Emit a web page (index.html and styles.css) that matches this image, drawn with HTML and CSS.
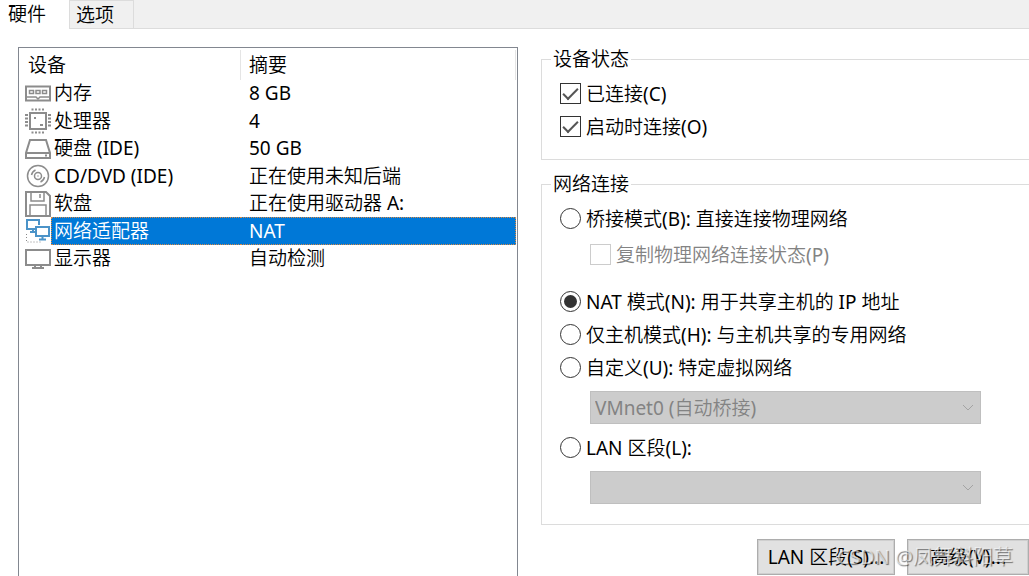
FILE: index.html
```html
<!DOCTYPE html>
<html lang="zh-CN">
<head>
<meta charset="utf-8">
<title>虚拟机设置</title>
<link rel="stylesheet" href="styles.css">
</head>
<body>
<div class="tabs" role="tablist">
  <button class="tab tab-active" role="tab" aria-selected="true">硬件</button>
  <button class="tab" role="tab" aria-selected="false">选项</button>
</div>
<main class="panel">
  <section class="devices">
    <table class="device-table">
      <thead>
        <tr><th class="col-device">设备</th><th class="col-summary">摘要</th></tr>
      </thead>
      <tbody>
        <tr><td><div class="device">
          <svg class="icon" viewBox="0 0 26 26" fill="none" stroke="#8c8c8c" stroke-width="2"><path d="M1 5.500h24v14H1z"/><path d="M1 16h10l2 2 2-2h10" stroke-width="1.500"/><path d="M4.500 9.500h4v3h-4zM11 9.500h4v3h-4zM17.500 9.500h4v3h-4z" stroke-width="1.500"/></svg>
          <span class="name">内存</span></div></td><td>8 GB</td></tr>
        <tr><td><div class="device">
          <svg class="icon" viewBox="0 0 26 26" fill="none" stroke="#8c8c8c" stroke-width="2"><rect x="5" y="5" width="16" height="16"/><path d="M6.500 1.500h2m1.500 0h2m1.500 0h2m1.500 0h2M6.500 24.500h2m1.500 0h2m1.500 0h2m1.500 0h2" stroke-width="2"/><path d="M1.500 6v2m0 1.500v2m0 1.500v2m0 1.500v2M24.500 6v2m0 1.500v2m0 1.500v2m0 1.500v2" stroke-width="3"/><path d="M9 10h2M15 17h3" stroke-width="2"/></svg>
          <span class="name">处理器</span></div></td><td>4</td></tr>
        <tr><td><div class="device">
          <svg class="icon" viewBox="0 0 26 26" fill="none" stroke="#8c8c8c" stroke-width="2"><path d="M5 4h16l4 13v5H1v-5z"/><path d="M1 17h24"/><path d="M20 19.500h2"/></svg>
          <span class="name">硬盘 (IDE)</span></div></td><td>50 GB</td></tr>
        <tr><td><div class="device">
          <svg class="icon" viewBox="0 0 26 26" fill="none" stroke="#8c8c8c" stroke-width="1.500"><circle cx="13" cy="13" r="10.500"/><circle cx="13" cy="13" r="3.500"/><path d="M6.500 12a7 7 0 0 1 4-5M19.500 14a7 7 0 0 1-4 5"/><path d="M12.500 13h1"/></svg>
          <span class="name">CD/DVD (IDE)</span></div></td><td>正在使用未知后端</td></tr>
        <tr><td><div class="device">
          <svg class="icon" viewBox="0 0 26 26" fill="none" stroke="#8c8c8c" stroke-width="2"><path d="M1 1h20l4 4v20H1z"/><path d="M6 1v9h13V1M15 3v4M5 25V14h16v11" stroke-width="1.500"/></svg>
          <span class="name">软盘</span></div></td><td>正在使用驱动器 A:</td></tr>
        <tr class="selected" aria-selected="true"><td><div class="device">
          <svg class="icon" viewBox="0 0 26 26" fill="none" stroke="#4b93c8" stroke-width="2"><path d="M10 11H2V2h12v5M5 14h5M8 12v2"/><path d="M11 9h13v9H11zM17.500 18v3M14 21.500h7"/><path d="M1.500 16v8H16" stroke="#888" stroke-dasharray="1 2" stroke-width="1"/></svg>
          <span class="name">网络适配器</span></div></td><td>NAT</td></tr>
        <tr><td><div class="device">
          <svg class="icon" viewBox="0 0 26 26" fill="none" stroke="#8c8c8c" stroke-width="2"><path d="M1 4h24v15H1z"/><path d="M10 20v2M16 20v2M7 22h12"/></svg>
          <span class="name">显示器</span></div></td><td>自动检测</td></tr>
      </tbody>
    </table>
  </section>
  <section class="settings">
    <fieldset class="group group-status">
      <legend>设备状态</legend>
      <label class="option"><input type="checkbox" checked>已连接(C)</label>
      <label class="option"><input type="checkbox" checked>启动时连接(O)</label>
    </fieldset>
    <fieldset class="group group-network">
      <legend>网络连接</legend>
      <label class="option"><input type="radio" name="mode">桥接模式(B): 直接连接物理网络</label>
      <label class="option option-sub"><input type="checkbox" disabled>复制物理网络连接状态(P)</label>
      <label class="option"><input type="radio" name="mode" checked>NAT 模式(N): 用于共享主机的 IP 地址</label>
      <label class="option"><input type="radio" name="mode">仅主机模式(H): 与主机共享的专用网络</label>
      <label class="option"><input type="radio" name="mode">自定义(U): 特定虚拟网络</label>
      <div class="combo">
        <select disabled aria-label="特定虚拟网络"><option>VMnet0 (自动桥接)</option></select>
        <svg class="chevron" viewBox="0 0 12 8" fill="none" stroke="#a3a3a3"><path d="M1 1l5 5 5-5"/></svg>
      </div>
      <label class="option option-lan"><input type="radio" name="mode">LAN 区段(L):</label>
      <div class="combo">
        <select disabled aria-label="LAN 区段"><option></option></select>
        <svg class="chevron" viewBox="0 0 12 8" fill="none" stroke="#a3a3a3"><path d="M1 1l5 5 5-5"/></svg>
      </div>
    </fieldset>
    <div class="actions">
      <button class="button button-lan">LAN 区段(S)...</button>
      <button class="button button-advanced">高级(V)...</button>
    </div>
  </section>
</main>
<div class="watermark">CSDN @凤舞斜阳草</div>
</body>
</html>
```
FILE: styles.css
```css
* {
  box-sizing: border-box;
}

body {
  margin: 0;
  height: 100vh;
  display: flex;
  flex-direction: column;
  position: relative;
  overflow: hidden;
  background: #fff;
  color: #000;
  font: 400 19px/28px "Noto Sans", "Noto Sans CJK SC DemiLight", "Noto Sans CJK SC", sans-serif;
}

button,
select,
input {
  font: inherit;
  color: inherit;
  margin: 0;
}

.tabs {
  display: flex;
  height: 29px;
  flex: none;
  background: #f0f0f0;
  border-bottom: 1px solid #dcdcdc;
}

.tab {
  width: 64px;
  padding: 0 0 0 6px;
  text-align: left;
  border: 1px solid #dcdcdc;
  border-width: 1px 1px 0 0;
  background: #f0f0f0;
}

.tab-active {
  width: 70px;
  height: 29px;
  padding: 0 0 6px 8px;
  border-top: 0;
  background: #fff;
}

.panel {
  flex: 1;
  min-height: 0;
  display: flex;
  gap: 23px;
  padding: 18px 0 0 18px;
}

.devices {
  flex: 0 0 500px;
  padding: 2px 1px 0 6px;
  border: 1px solid #828790;
  border-bottom: 0;
}

.device-table {
  width: 100%;
  border-collapse: separate;
  border-spacing: 0;
  table-layout: fixed;
}

th,
td {
  padding: 0 0 0 8px;
  text-align: left;
  font-weight: inherit;
}

th {
  height: 30px;
  border-right: 1px solid #e5e5e5;
}

.col-device {
  width: 216px;
  padding-left: 3px;
}

td {
  line-height: 27px;
  height: 27px;
}

tr:nth-child(even) td {
  line-height: 28px;
  height: 28px;
}

td:first-child {
  padding: 0;
}

.device {
  display: flex;
  align-items: center;
}

.icon {
  width: 26px;
  height: 26px;
  flex: none;
}

.name {
  flex: 1;
  padding-left: 3px;
}

.device-table .selected td {
  color: #fff;
  line-height: 26px;
}

.selected .name,
.selected td:last-child {
  background: #0078d7;
  border: 1px dotted #d98a45;
}

.selected .name {
  border-right: 0;
  padding-left: 2px;
}

.selected td:last-child {
  border-left: 0;
}

.settings {
  flex: 1;
  min-width: 0;
}

.group {
  min-width: 0;
  margin: 0 -2px 0 0;
  border: 1px solid #dcdcdc;
  padding: 5px 0 0 18px;
}

.group-status {
  padding-bottom: 16px;
}

.group-network {
  margin-top: 12px;
  padding-bottom: 20px;
}

legend {
  height: 25px;
  line-height: 25px;
  padding: 0 2px;
  margin-left: -9px;
}

.option {
  display: flex;
  align-items: center;
  gap: 5px;
  height: 33px;
  white-space: nowrap;
}

.option-sub {
  margin: 3px 0 14px 30px;
  color: #838383;
}

.option-lan {
  margin-top: 7px;
}

input {
  appearance: none;
  flex: none;
  width: 21px;
  height: 21px;
  border: 1px solid #333;
  background: #fff;
  display: grid;
  place-items: center;
}

input[type="radio"] {
  border-radius: 50%;
}

input[type="radio"]:checked::before {
  content: "";
  width: 13px;
  height: 13px;
  border-radius: 50%;
  background: #333;
}

input[type="checkbox"]:checked::before {
  content: "";
  width: 13px;
  height: 6px;
  margin-bottom: 4px;
  border: solid #555;
  border-width: 0 0 2px 2px;
  transform: rotate(-45deg);
}

input:disabled {
  border-color: #ccc;
}

.combo {
  position: relative;
  width: 391px;
  margin: 7px 0 0 30px;
}

.combo select {
  appearance: none;
  display: block;
  width: 100%;
  height: 33px;
  padding: 0 4px;
  border: 1px solid #bfbfbf;
  border-radius: 0;
  background: #ccc;
  color: #838383;
  opacity: 1;
}

.chevron {
  position: absolute;
  right: 7px;
  top: 13px;
  width: 12px;
  height: 8px;
}

.actions {
  display: flex;
  gap: 12px;
  justify-content: flex-end;
  margin-top: 14px;
}

.button {
  height: 36px;
  padding: 0;
  border: 1px solid #adadad;
  background: #e1e1e1;
  box-shadow: inset 0 0 0 1px #cfcfcf;
}

.button-lan {
  width: 138px;
}

.button-advanced {
  width: 122px;
}

.watermark {
  position: absolute;
  right: 16px;
  bottom: 5px;
  font-size: 20px;
  color: rgba(255, 255, 255, 0.6);
  text-shadow: 1px 1px 1px rgba(0, 0, 0, 0.5);
  pointer-events: none;
}
```
